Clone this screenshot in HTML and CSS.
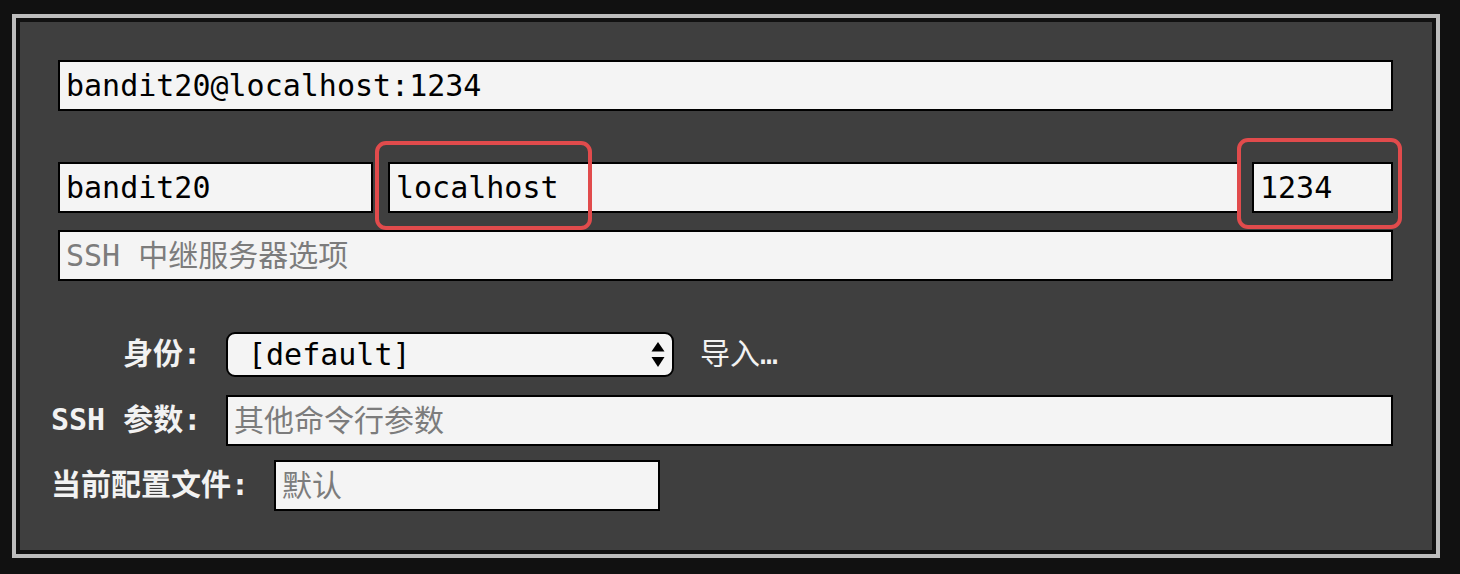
FILE: index.html
```html
<!DOCTYPE html>
<html lang="zh-CN">
<head>
<meta charset="utf-8">
<title>SSH</title>
<link rel="stylesheet" href="styles.css">
</head>
<body>
<div class="panel">
  <div class="panel-inner">
    <input class="field" type="text" value="bandit20@localhost:1234">
    <div class="host-row">
      <input class="field user" type="text" value="bandit20">
      <input class="field host" type="text" value="localhost">
      <input class="field port" type="text" value="1234">
      <div class="mark mark-host"></div>
      <div class="mark mark-port"></div>
    </div>
    <input class="field relay" type="text" placeholder="SSH 中继服务器选项">
    <div class="form-row identity-row">
      <label class="label">身份:</label>
      <div class="select">
        <span class="select-text">[default]</span>
        <svg class="select-arrows" width="14" height="25" viewBox="0 0 14 25"><path d="M7 0 L13.5 9.5 L0.5 9.5 Z" fill="#000"/><path d="M7 25 L13.5 15 L0.5 15 Z" fill="#000"/></svg>
      </div>
      <span class="import">导入…</span>
    </div>
    <div class="form-row args-row">
      <label class="label">SSH 参数:</label>
      <input class="field grow" type="text" placeholder="其他命令行参数">
    </div>
    <div class="form-row profile-row">
      <label class="label auto">当前配置文件:</label>
      <input class="field profile" type="text" placeholder="默认">
    </div>
  </div>
</div>
</body>
</html>
```
FILE: styles.css
```css
* { box-sizing: border-box; }
html, body { margin: 0; }
body {
  background: #111111;
  padding: 14px 20px 16px 12px;
  font-family: "DejaVu Sans Mono", "Noto Sans CJK SC", monospace;
  font-size: 30px;
}
.panel {
  border: 4px solid #bdbdbd;
}
.panel-inner {
  border: 4px solid #111111;
  background: #3f3f3f;
  padding: 38px 39px 39px 38px;
  display: flex;
  flex-direction: column;
}
.field {
  display: block;
  width: 100%;
  height: 51px;
  border: 2px solid #000;
  background: #f4f4f4;
  color: #000;
  font-family: "DejaVu Sans Mono", "Noto Sans CJK SC", monospace;
  font-size: 30px;
  padding: 0 6px;
  margin: 0;
  outline: none;
  border-radius: 0;
}
.field::placeholder { color: #7c7c7c; opacity: 1; }
.host-row {
  position: relative;
  display: flex;
  margin-top: 51px;
}
.host-row .user { width: 315px; flex: none; margin-right: 15px; }
.host-row .host { flex: 1; width: auto; margin-right: 12px; }
.host-row .port { width: 141px; flex: none; }
.mark {
  position: absolute;
  border: 4px solid #e14b4c;
  border-radius: 11px;
}
.mark-host { left: 317px; top: -21px; width: 217px; height: 89px; }
.mark-port { left: 1179px; top: -24px; width: 165px; height: 91px; }
.relay { margin-top: 17px; }
.form-row {
  display: flex;
  align-items: center;
  margin-left: -7px;
}
.identity-row { margin-top: 51px; }
.args-row { margin-top: 18px; }
.profile-row { margin-top: 14px; }
.label {
  width: 150px;
  flex: none;
  text-align: right;
  margin-right: 25px;
  line-height: 36px;
  padding-bottom: 1px;
  color: #f2f2f2;
  font-weight: bold;
  white-space: nowrap;
}
.label.auto { width: auto; }
.select {
  width: 448px;
  height: 45px;
  flex: none;
  border: 2px solid #000;
  border-radius: 9px;
  background: #f4f4f4;
  display: flex;
  align-items: center;
  justify-content: space-between;
  padding: 0 7px 0 20px;
}
.select-text { color: #000; line-height: 36px; }
.select-arrows { display: block; }
.import {
  color: #f2f2f2;
  margin-left: 26px;
  line-height: 36px;
  padding-bottom: 1px;
}
.grow { flex: 1; width: auto; }
.profile { width: 386px; flex: none; }
```
